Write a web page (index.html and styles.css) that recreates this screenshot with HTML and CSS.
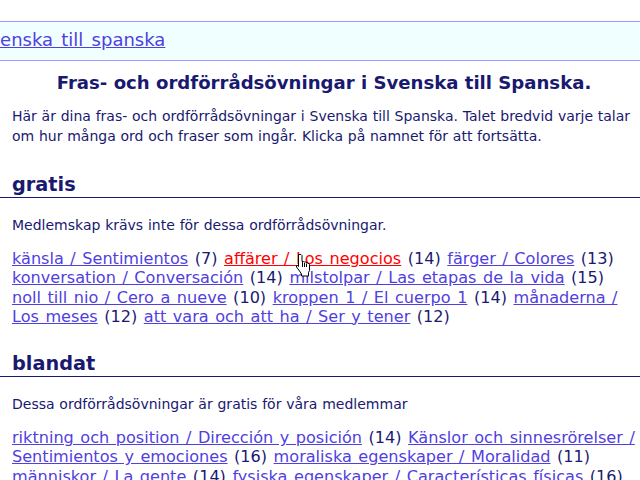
FILE: index.html

```html
<!DOCTYPE html>
<html lang="sv">
<head>
    <meta charset="UTF-8">
    <title>Fras- och ordförrådsövningar</title>
    <link rel="stylesheet" href="styles.css">
</head>
<body>
    <div class="crumb"><a href="#">Svenska till spanska</a></div>

    <h1>Fras- och ordförrådsövningar i Svenska till Spanska.</h1>
    <p class="intro">Här är dina fras- och ordförrådsövningar i Svenska till Spanska. Talet bredvid varje talar om hur många ord och fraser som ingår. Klicka på namnet för att fortsätta.</p>

    <h2>gratis</h2>
    <p class="note">Medlemskap krävs inte för dessa ordförrådsövningar.</p>
    <p class="links">
        <a href="#">känsla / Sentimientos</a> (7)
        <a href="#" class="hover">affärer / Los negocios</a> (14)
        <a href="#">färger / Colores</a> (13)
        <a href="#">konversation / Conversación</a> (14)
        <a href="#">milstolpar / Las etapas de la vida</a> (15)
        <a href="#">noll till nio / Cero a nueve</a> (10)
        <a href="#">kroppen 1 / El cuerpo 1</a> (14)
        <a href="#">månaderna / Los meses</a> (12)
        <a href="#">att vara och att ha / Ser y tener</a> (12)
    </p>

    <h2>blandat</h2>
    <p class="note">Dessa ordförrådsövningar är gratis för våra medlemmar</p>
    <p class="links">
        <a href="#">riktning och position / Dirección y posición</a> (14)
        <a href="#">Känslor och sinnesrörelser / Sentimientos y emociones</a> (16)
        <a href="#">moraliska egenskaper / Moralidad</a> (11)
        <a href="#">människor / La gente</a> (14)
        <a href="#">fysiska egenskaper / Características físicas</a> (16)
    </p>

    <svg class="cursor" width="17" height="24" viewBox="0 0 17 24">
        <path d="M3.500 1.500H6L7 2.500V8.500H8.500L9.500 9H11L12 10H13L14.500 11.500V17.500L13.500 19.500V23H6.500V21L4.500 18L1.500 14V12.500H2.500L3.500 13.500Z" fill="#fff" stroke="#000" stroke-width="1"/>
        <path d="M7.500 9v5M9.500 10v4M11.500 10.500v3.500" stroke="#000" stroke-width="1" fill="none"/>
    </svg>
</body>
</html>
```

FILE: styles.css

```css
html, body { overflow: hidden; }
body {
    margin: 0;
    height: 480px;
    padding-top: 21px;
    box-sizing: border-box;
    font-family: "DejaVu Sans", Verdana, sans-serif;
    font-size: 16.1px;
    word-spacing: 1.4px;
    color: #191970;
    background: #fff;
}
a { color: #5040e0; }
a.hover { color: #f00; }

.crumb {
    height: 38px;
    line-height: 36px;
    background: #f0ffff;
    border-top: 1px solid #9a9aff;
    border-bottom: 1px solid #9a9aff;
    font-size: 18px;
    word-spacing: 2.5px;
    margin-bottom: 11px;
    white-space: nowrap;
    text-indent: -22px;
}
h1 {
    margin: 0 0 12px;
    font-size: 18.1px;
    word-spacing: 0;
    line-height: 22px;
    text-align: center;
    padding-left: 8px;
}
.intro {
    margin: 0 0 25px 12px;
    font-size: 14px;
    word-spacing: .3px;
    line-height: 20px;
}
h2 {
    margin: 0 0 17px;
    padding: 2px 0 0 12px;
    font-size: 19.3px;
    line-height: 24px;
    border-bottom: 1px solid #191970;
}
.note {
    margin: 0 0 14px 12px;
    font-size: 14px;
    word-spacing: .35px;
    line-height: 20px;
}
.links {
    margin: 0 2px 24px 12px;
    line-height: 19.3px;
}
.cursor {
    position: absolute;
    left: 295px;
    top: 253px;
}
```
